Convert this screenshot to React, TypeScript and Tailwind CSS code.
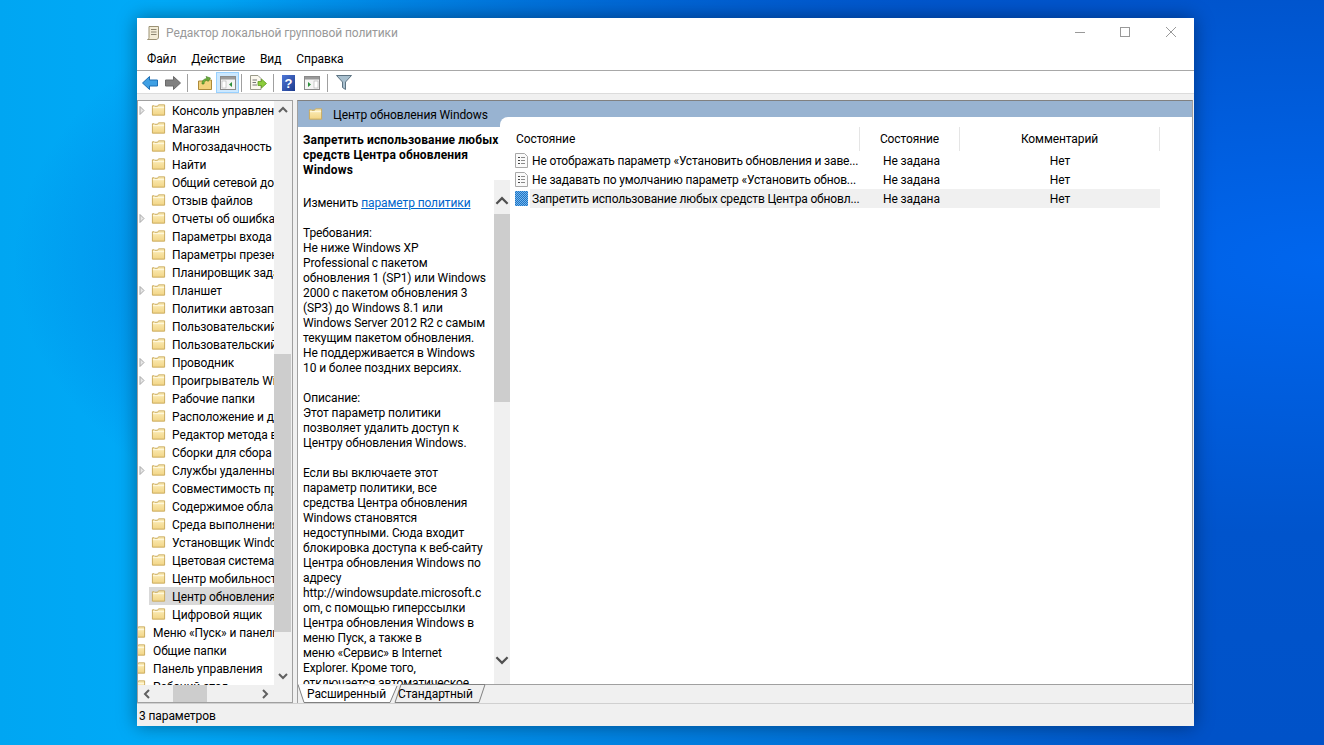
import React from "react";

const treeItems: [string, boolean][] = [
  ["Консоль управления", true],
  ["Магазин", false],
  ["Многозадачность", false],
  ["Найти", false],
  ["Общий сетевой доступ", false],
  ["Отзыв файлов", false],
  ["Отчеты об ошибках", true],
  ["Параметры входа Windows", false],
  ["Параметры презентации", false],
  ["Планировщик заданий", false],
  ["Планшет", true],
  ["Политики автозапуска", false],
  ["Пользовательский интерфейс", false],
  ["Пользовательский интерфейс", false],
  ["Проводник", true],
  ["Проигрыватель Windows", true],
  ["Рабочие папки", false],
  ["Расположение и датчики", false],
  ["Редактор метода ввода", false],
  ["Сборки для сбора данных", false],
  ["Службы удаленных рабочих", true],
  ["Совместимость приложений", false],
  ["Содержимое облака", false],
  ["Среда выполнения", false],
  ["Установщик Windows", false],
  ["Цветовая система", false],
  ["Центр мобильности", false],
  ["Центр обновления Windows", false],
  ["Цифровой ящик", false],
];
const upperItems = ["Меню «Пуск» и панель задач", "Общие папки", "Панель управления", "Рабочий стол"];

const descLines = [
  "Требования:",
  "Не ниже Windows XP",
  "Professional с пакетом",
  "обновления 1 (SP1) или Windows",
  "2000 с пакетом обновления 3",
  "(SP3) до Windows 8.1 или",
  "Windows Server 2012 R2 с самым",
  "текущим пакетом обновления.",
  "Не поддерживается в Windows",
  "10 и более поздних версиях.",
  "",
  "Описание:",
  "Этот параметр политики",
  "позволяет удалить доступ к",
  "Центру обновления Windows.",
  "",
  "Если вы включаете этот",
  "параметр политики, все",
  "средства Центра обновления",
  "Windows становятся",
  "недоступными. Сюда входит",
  "блокировка доступа к веб-сайту",
  "Центра обновления Windows по",
  "адресу",
  "http://windowsupdate.microsoft.c",
  "om, с помощью гиперссылки",
  "Центра обновления Windows в",
  "меню Пуск, а также в",
  "меню «Сервис» в Internet",
  "Explorer. Кроме того,",
  "отключается автоматическое",
];

const rows = [
  ["Не отображать параметр «Установить обновления и заве...", false],
  ["Не задавать по умолчанию параметр «Установить обнов...", false],
  ["Запретить использование любых средств Центра обновл...", true],
] as const;

function Folder({ className = "" }: { className?: string }) {
  return (
    <svg width="15" height="14" viewBox="0 0 16 14" className={"shrink-0 " + className}>
      <defs>
        <linearGradient id="fg" x1="0" y1="0" x2="0" y2="1">
          <stop offset="0" stopColor="#fcefbc" />
          <stop offset="1" stopColor="#f2d586" />
        </linearGradient>
      </defs>
      <path d="M1.5 2.5 V12.5 H14.5 V1.5 H8 L7 3 H4 L3.5 2.5 Z" fill="url(#fg)" stroke="#c9a95a" />
      <path d="M2 4.5 H14" stroke="#fffbe6" />
    </svg>
  );
}

function Chevron({ dir, size = 10, color = "#606060", w = 2 }: { dir: "up" | "down" | "left" | "right"; size?: number; color?: string; w?: number }) {
  const pts = {
    up: "1,7 5,3 9,7",
    down: "1,3 5,7 9,3",
    left: "7,1 3,5 7,9",
    right: "3,1 7,5 3,9",
  }[dir];
  return (
    <svg width={size} height={size} viewBox="0 0 10 10" className="shrink-0">
      <polyline points={pts} fill="none" stroke={color} strokeWidth={w} />
    </svg>
  );
}

function Sep() {
  return <div className="w-px h-[18px] bg-[#a0a0a0] shrink-0" />;
}

function TreeArrow() {
  return (
    <svg width="6" height="9" viewBox="0 0 6 9" className="shrink-0">
      <path d="M1 .5 L5 4.5 L1 8.5 Z" fill="#e8e8e8" stroke="#a6a6a6" />
    </svg>
  );
}

function PolicyIcon({ active }: { active: boolean }) {
  if (active) {
    return (
      <svg width="13" height="15" viewBox="0 0 13 15" className="shrink-0" shapeRendering="crispEdges">
        <defs>
          <pattern id="dith" width="2" height="2" patternUnits="userSpaceOnUse">
            <rect width="2" height="2" fill="#1f74c6" />
            <rect width="1" height="1" fill="#74b6ec" />
            <rect x="1" y="1" width="1" height="1" fill="#74b6ec" />
          </pattern>
        </defs>
        <rect width="13" height="15" fill="url(#dith)" />
      </svg>
    );
  }
  return (
    <svg width="13" height="15" viewBox="0 0 13 15" className="shrink-0">
      <path d="M.5 .5 H9.5 L12.5 3.5 V14.5 H.5 Z" fill="#fafafa" stroke="#a8a8a8" />
      <path d="M3 4.5 H5 M3 7.5 H5 M3 10.5 H5" stroke="#444" />
      <path d="M6 4.5 H10 M6 7.5 H10 M6 10.5 H10" stroke="#8a8a8a" />
    </svg>
  );
}

export default function App() {
  return (
    <div
      className="w-[1324px] h-[745px] overflow-hidden pt-[18px] pl-[137px] bg-[radial-gradient(ellipse_at_100%_35%,#0066ee_0%,#0054cc_40%,transparent_70%),linear-gradient(90deg,#00a6f2_0%,#00aaf8_12%,#0052c8_90%)]"
      style={{ fontFamily: 'Roboto, "Noto Sans", sans-serif' }}
    >
      <div className="w-[1057px] h-[708px] flex flex-col bg-[#f0f0f0] text-[12px] leading-[15px] tracking-[-0.1px] text-black shadow-[0_0_18px_rgba(0,0,0,0.4)]">
        {/* Title bar */}
        <div className="h-[30px] bg-white flex items-center shrink-0 pl-[8px]">
          <svg width="16" height="16" viewBox="0 0 16 16" className="shrink-0">
            <path d="M4 1.5 H13.5 V12 C13.5 14 12 14.5 11 14.5 H2.5 C3.5 14.5 4 13.5 4 12.5 Z" fill="#f3ecd6" stroke="#9c9275" />
            <path d="M6 4.5 H11.5 M6 7 H11.5 M6 9.5 H11.5" stroke="#8d8570" />
          </svg>
          <span className="ml-[5px] text-[#999999]">Редактор локальной групповой политики</span>
          <div className="ml-auto flex items-center pr-[18px] -mt-[2px]">
            <div className="w-[10px] h-px bg-[#999999]" />
            <div className="ml-[35px] w-[10px] h-[10px] border border-[#999999]" />
            <svg width="10" height="10" viewBox="0 0 10 10" className="ml-[36px]">
              <path d="M0 0 L10 10 M10 0 L0 10" stroke="#999999" strokeWidth="1" />
            </svg>
          </div>
        </div>
        {/* Menu */}
        <div className="h-[22px] bg-white flex items-center shrink-0 pl-[10px] gap-[15px]">
          <span>Файл</span>
          <span>Действие</span>
          <span>Вид</span>
          <span>Справка</span>
        </div>
        <div className="h-px bg-[#a8a8a8] shrink-0" />
        {/* Toolbar */}
        <div className="h-[22px] bg-white flex items-center shrink-0 pl-[5px] pt-[1px]">
          <svg width="16" height="14" viewBox="0 0 16 14" className="shrink-0">
            <path d="M7.5 .5 L.5 7 L7.5 13.5 V10 H15.5 V4 H7.5 Z" fill="#3fa0e4" stroke="#1f6fb4" />
          </svg>
          <svg width="16" height="14" viewBox="0 0 16 14" className="shrink-0 ml-[7px]">
            <path d="M8.5 .5 L15.5 7 L8.5 13.5 V10 H.5 V4 H8.5 Z" fill="#808080" stroke="#6a6a6a" />
          </svg>
          <div className="ml-[6px]"><Sep /></div>
          <svg width="16" height="16" viewBox="0 0 16 16" className="shrink-0 ml-[9px]">
            <path d="M1.5 6 V14.5 H14.5 V5 H8 L7 6 Z" fill="#f2d27c" stroke="#ad8a3a" />
            <path d="M5 9 C5 5 7 4 10 3.5 L9 1.5 L13.5 3 L11 6.5 L10.5 5 C8 5.5 7 7 7 9 Z" fill="#6cae3c" stroke="#3f7d20" strokeWidth=".6" />
          </svg>
          <div className="ml-[3px] w-[23px] h-[21px] bg-[#cce8ff] border border-[#99d1ff] flex items-center justify-center shrink-0">
            <svg width="16" height="14" viewBox="0 0 16 14">
              <rect x=".5" y=".5" width="15" height="13" fill="#f4f4f4" stroke="#8a8a8a" />
              <rect x="1" y="1" width="14" height="2.5" fill="#9a9a9a" />
              <rect x="2" y="5" width="4" height="7" fill="#fff" stroke="#a0a0a0" strokeWidth=".5" />
              <path d="M12 6 L9 8.5 L12 11 Z" fill="#2d8f3c" />
            </svg>
          </div>
          <div className="ml-[2px]"><Sep /></div>
          <svg width="17" height="15" viewBox="0 0 17 15" className="shrink-0 ml-[8px]">
            <path d="M.5 .5 H8 L11 3.5 V14.5 H.5 Z" fill="#fbf8ee" stroke="#9a9a8a" />
            <path d="M2.5 5 H7 M2.5 7.5 H6 M2.5 10 H7" stroke="#777" />
            <path d="M8 6.5 H11.5 V4 L16.5 8.5 L11.5 13 V10.5 H8 Z" fill="#8ccc3c" stroke="#5f9a20" strokeWidth=".8" />
          </svg>
          <div className="ml-[6px]"><Sep /></div>
          <svg width="13" height="16" viewBox="0 0 13 16" className="shrink-0 ml-[8px]">
            <defs>
              <linearGradient id="hg" x1="0" y1="0" x2="1" y2="1">
                <stop offset="0" stopColor="#4f78d8" />
                <stop offset="1" stopColor="#1d3a8c" />
              </linearGradient>
            </defs>
            <rect width="13" height="16" fill="url(#hg)" />
            <text x="6.5" y="13" fontSize="13" fontWeight="700" textAnchor="middle" fill="#fff" fontFamily="Liberation Sans">?</text>
          </svg>
          <svg width="16" height="14" viewBox="0 0 16 14" className="shrink-0 ml-[9px]">
            <rect x=".5" y=".5" width="15" height="13" fill="#f4f4f4" stroke="#8a8a8a" />
            <rect x="1" y="1" width="14" height="2.5" fill="#9a9a9a" />
            <path d="M4 6 L7 8.5 L4 11 Z" fill="#2d8f3c" />
            <rect x="10" y="5" width="4" height="7" fill="#fff" stroke="#a0a0a0" strokeWidth=".5" />
          </svg>
          <div className="ml-[7px]"><Sep /></div>
          <svg width="16" height="15" viewBox="0 0 16 15" className="shrink-0 ml-[8px]">
            <path d="M.5 .5 H15.5 L9.5 7 V14.5 L6.5 12.5 V7 Z" fill="#a9c0cf" stroke="#5e7483" />
          </svg>
        </div>
        <div className="h-px bg-[#dcdcdc] shrink-0" />
        <div className="h-[6px] shrink-0" />
        {/* Main */}
        <div className="h-[603px] flex shrink-0">
          {/* Left pane */}
          <div className="w-[156px] shrink-0 border border-[#a0a0a0] flex flex-col">
            <div className="h-[584px] flex shrink-0">
              <div className="w-[136px] bg-white overflow-hidden shrink-0">
                {treeItems.map(([label, arrow], i) => (
                  <div key={i} className="h-[18px] flex items-center">
                    <div className="w-[11px] shrink-0 flex justify-start pl-[1px]">{arrow && <TreeArrow />}</div>
                    <div className={"flex items-center h-[18px] grow min-w-0 " + (i === 27 ? "bg-[#d9d9d9]" : "")}>
                      <Folder className="ml-[2px]" />
                      <span className="ml-[6px] pt-[2px] whitespace-nowrap overflow-hidden">{label}</span>
                    </div>
                  </div>
                ))}
                {upperItems.map((label) => (
                  <div key={label} className="h-[18px] flex items-center overflow-hidden">
                    <Folder className="ml-[-7px]" />
                    <span className="ml-[7px] pt-[2px] whitespace-nowrap overflow-hidden">{label}</span>
                  </div>
                ))}
              </div>
              <div className="w-[17px] bg-[#f0f0f0] flex flex-col items-center shrink-0">
                <div className="h-[18px] flex items-center justify-center shrink-0"><Chevron dir="up" /></div>
                <div className="h-[235px] shrink-0" />
                <div className="h-[278px] w-full bg-[#cdcdcd] shrink-0" />
                <div className="grow" />
                <div className="h-[18px] flex items-center justify-center shrink-0"><Chevron dir="down" /></div>
              </div>
            </div>
            <div className="grow flex items-center">
              <div className="w-[18px] flex justify-center shrink-0"><Chevron dir="left" /></div>
              <div className="w-[17px] shrink-0" />
              <div className="w-[34px] h-full bg-[#cdcdcd] shrink-0" />
              <div className="grow" />
              <div className="w-[36px] pr-[18px] flex justify-center shrink-0"><Chevron dir="right" /></div>
            </div>
          </div>
          <div className="w-[4px] shrink-0" />
          {/* Right pane */}
          <div className="w-[896px] shrink-0 border-l border-t border-r border-[#a0a0a0] border-t-[#808080] flex flex-col">
            <div className="h-[583px] flex bg-[#98b3d1] shrink-0 overflow-hidden">
              <div className="w-[212px] flex flex-col shrink-0 relative z-10">
                <div className="h-[26px] flex items-start shrink-0 w-[202px]">
                  <Folder className="ml-[10px] mt-[6px]" />
                  <span className="ml-[10px] mt-[7px] whitespace-nowrap">Центр обновления Windows</span>
                </div>
                <div className="grow flex bg-white min-h-0 overflow-hidden">
                  <div className="w-[196px] pl-[5px] pt-[6px] shrink-0 whitespace-nowrap relative z-10">
                    <div className="font-bold tracking-[0.15px]">
                      <div>Запретить использование любых</div>
                      <div>средств Центра обновления</div>
                      <div>Windows</div>
                    </div>
                    <div className="mt-[18px]">
                      Изменить <span className="text-[#0066cc] underline">параметр политики</span>
                    </div>
                    <div className="mt-[15px]">
                      {descLines.map((l, i) => (
                        <div key={i} className="h-[15px]">{l}</div>
                      ))}
                    </div>
                  </div>
                  <div className="w-[16px] flex flex-col items-center shrink-0">
                    <div className="h-[53px] w-full bg-white shrink-0" />
                    <div className="grow w-full bg-[#f0f0f0] flex flex-col items-center">
                      <div className="h-[34px] pb-[6px] flex items-end justify-center shrink-0 w-full"><Chevron dir="up" size={14} color="#505050" w={1.6} /></div>
                      <div className="h-[188px] w-full bg-[#cdcdcd] shrink-0" />
                      <div className="grow" />
                      <div className="h-[31px] flex items-start justify-center shrink-0 w-full"><Chevron dir="down" size={14} color="#505050" w={1.6} /></div>
                    </div>
                  </div>
                </div>
              </div>
              <div className="grow -ml-[10px] mt-[16px] bg-white rounded-tl-[8px] pl-[16px] pt-[10px]">
                <div className="flex h-[24px] w-[644px]">
                  <div className="w-[344px] border-r border-[#e5e5e5] pt-[5px]">Состояние</div>
                  <div className="w-[100px] border-r border-[#e5e5e5] pt-[5px] text-center">Состояние</div>
                  <div className="w-[200px] border-r border-[#e5e5e5] pt-[5px] text-center">Комментарий</div>
                </div>
                {rows.map(([label, active], i) => (
                  <div key={i} className="flex items-center h-[19px] w-[645px] -ml-[1px]">
                    <div className="w-[15px] shrink-0"><PolicyIcon active={active} /></div>
                    <div className={"flex items-center h-[19px] grow pt-[2px] " + (active ? "bg-[#f0f0f0]" : "")}>
                      <div className="w-[330px] pl-[2px] shrink-0 whitespace-nowrap overflow-hidden tracking-[-0.16px]">{label}</div>
                      <div className="w-[100px] pl-[23px] shrink-0">Не задана</div>
                      <div className="w-[200px] text-center shrink-0">Нет</div>
                    </div>
                  </div>
                ))}
              </div>
            </div>
            {/* Tabs */}
            <div className="relative grow flex items-center pl-[9px] pt-[2px]">
              <svg width="894" height="19" viewBox="0 0 894 19" className="absolute left-0 top-0">
                <path d="M97 18.5 L103 .5 H187 L181 18.5 Z" fill="#f0f0f0" stroke="#808080" />
                <path d="M0 .5 L6 18.5 H92 L99 2" fill="#fff" stroke="#808080" />
                <path d="M187 .5 H894" stroke="#a0a0a0" />
              </svg>
              <span className="relative">Расширенный</span>
              <span className="relative ml-[12px]">Стандартный</span>
            </div>
          </div>
        </div>
        {/* Status */}
        <div className="h-px bg-[#d0d0d0] shrink-0" />
        <div className="grow flex items-center pl-[2px] pt-[2px]">3 параметров</div>
      </div>
    </div>
  );
}
